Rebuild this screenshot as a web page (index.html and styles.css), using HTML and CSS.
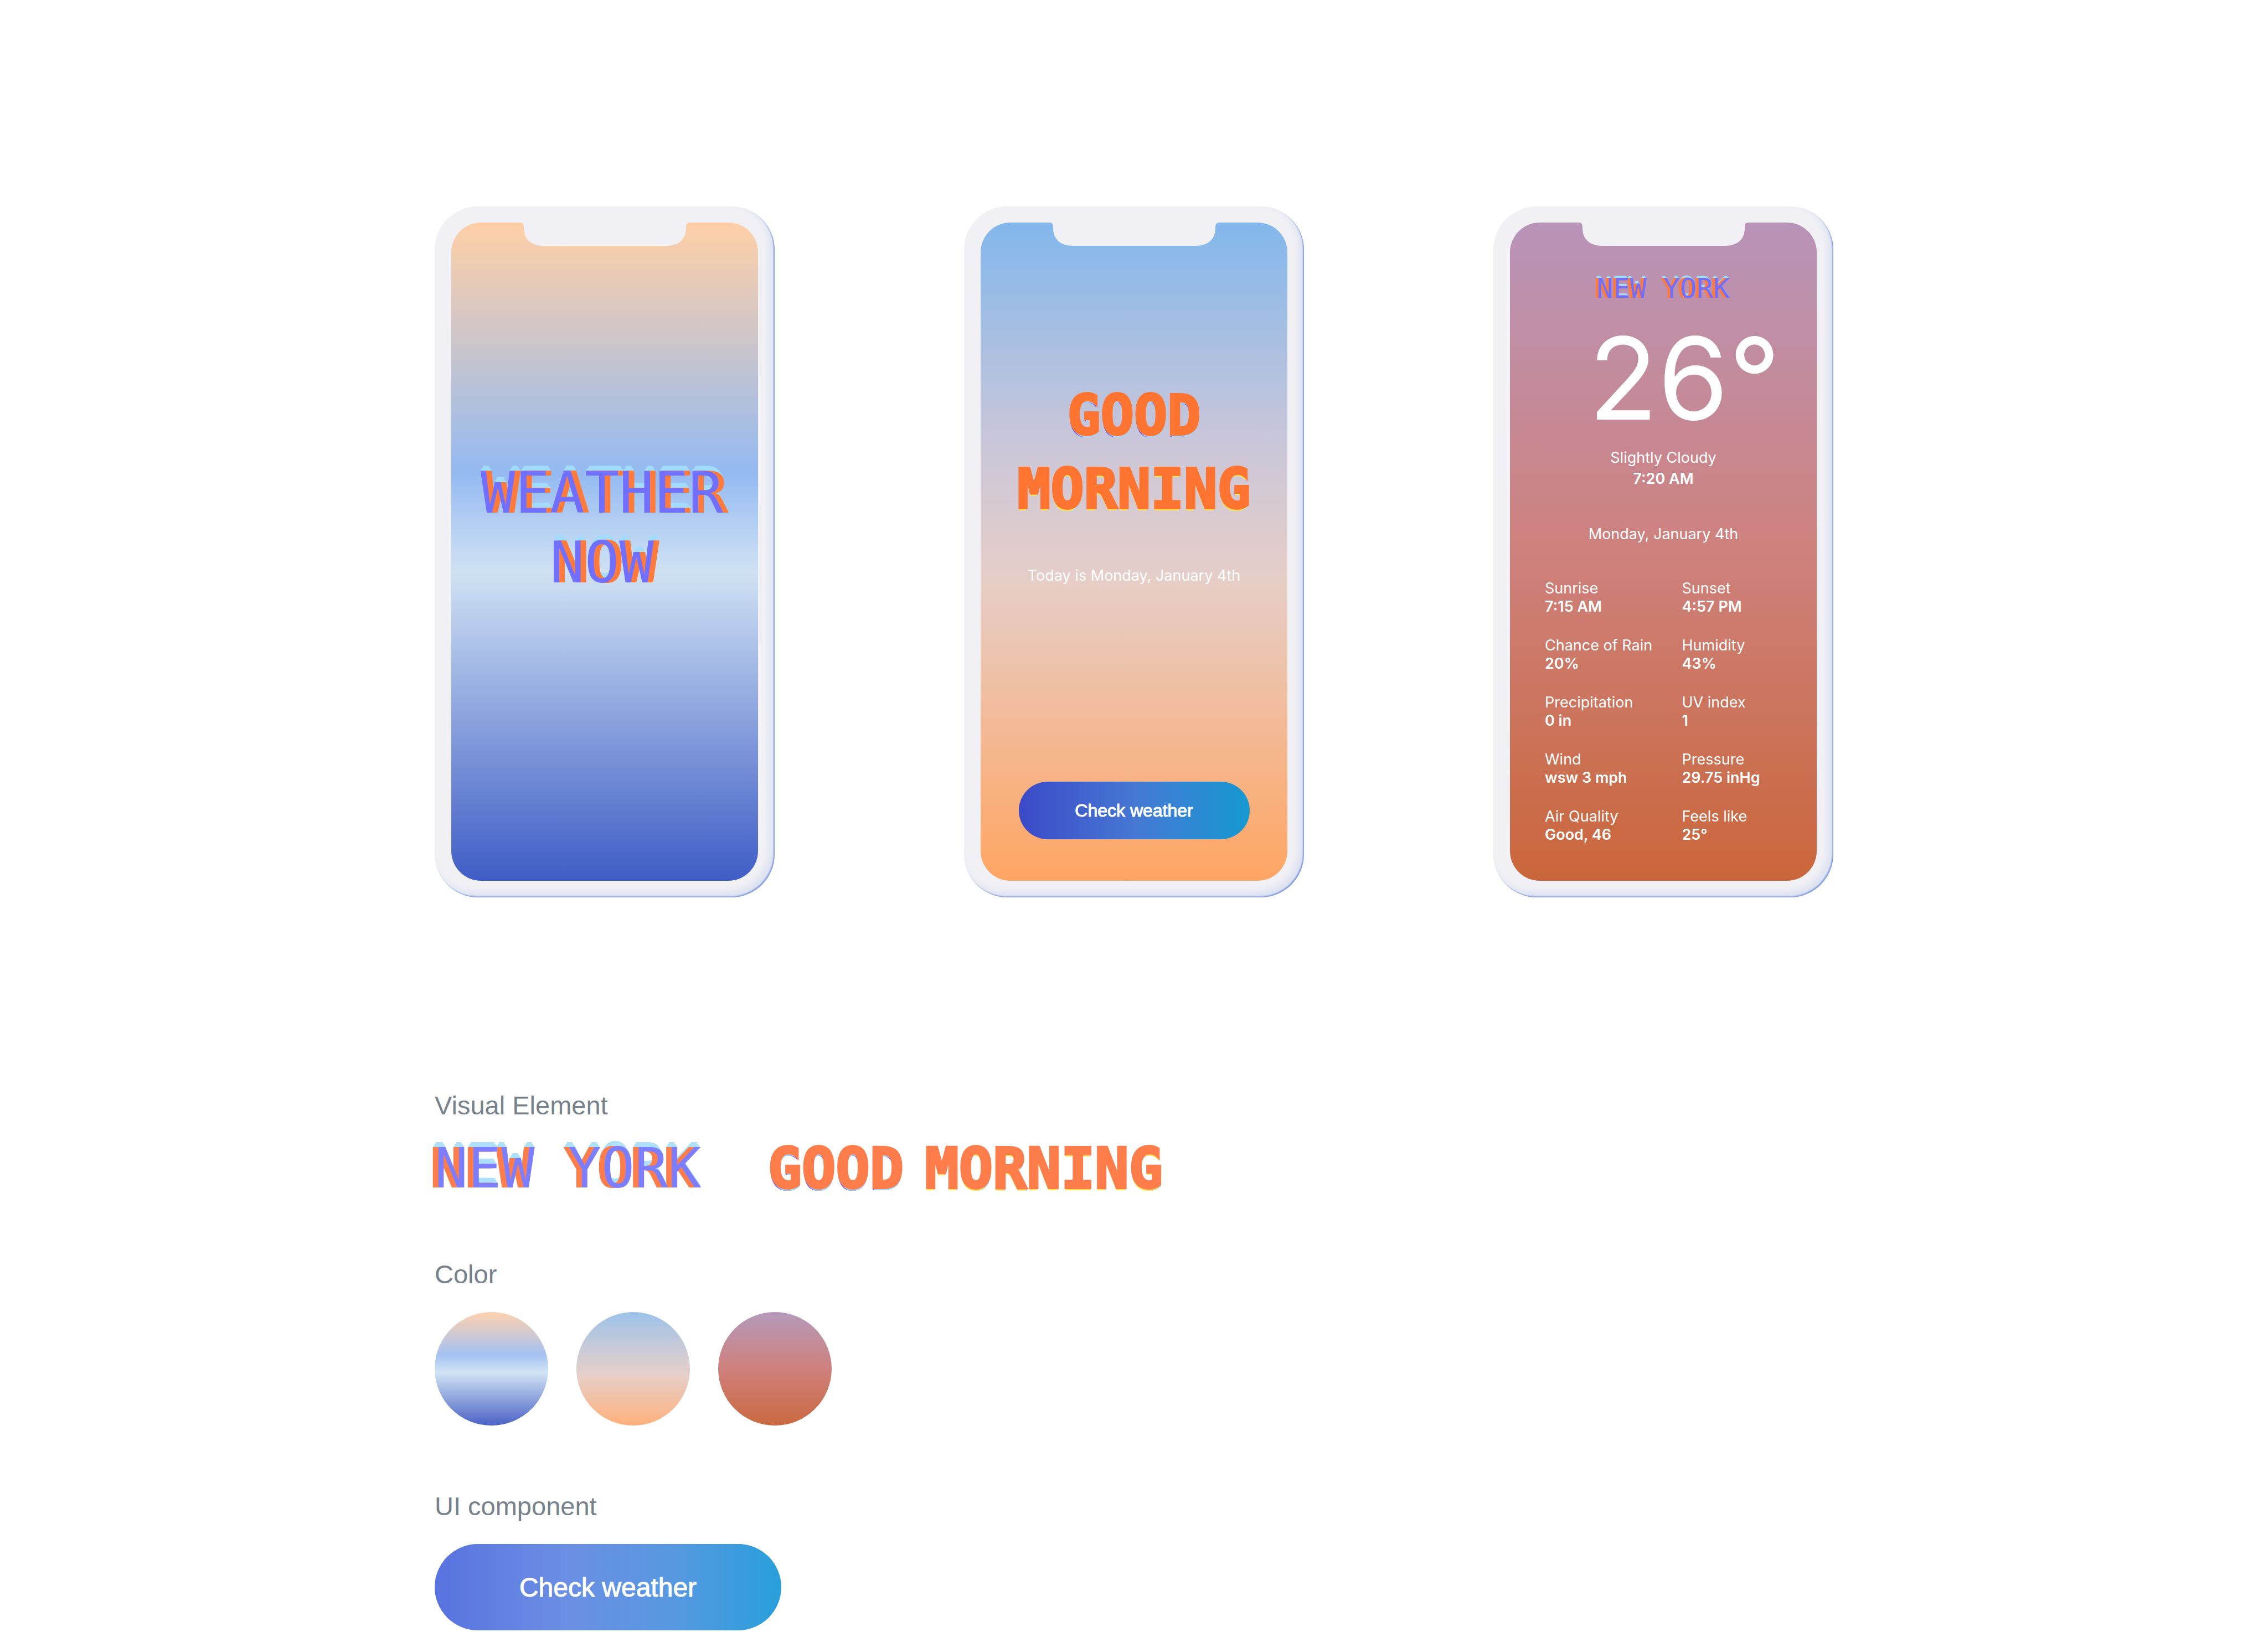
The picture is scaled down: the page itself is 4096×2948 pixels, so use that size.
FILE: index.html
```html
<!DOCTYPE html>
<html lang="en">
<head>
<meta charset="utf-8">
<meta name="viewport" content="width=device-width, initial-scale=1">
<title>Weather Now</title>
<link rel="stylesheet" href="styles.css">
</head>
<body>
<main class="page">
  <section class="phones" aria-label="Screens">
    <article class="phone">
      <div class="screen screen-splash">
        <svg class="notch" viewBox="0 0 307 42" aria-hidden="true"><path d="M0 0H307C301 0 300 4 300 10C300 30 287 42 264 42H43C20 42 7 30 7 10C7 4 6 0 0 0Z"/></svg>
        <h1 class="splash-title iso iso-violet">WEATHER<br>NOW</h1>
      </div>
    </article>

    <article class="phone">
      <div class="screen screen-morning">
        <svg class="notch" viewBox="0 0 307 42" aria-hidden="true"><path d="M0 0H307C301 0 300 4 300 10C300 30 287 42 264 42H43C20 42 7 30 7 10C7 4 6 0 0 0Z"/></svg>
        <h2 class="greeting block"><span class="edge-violet">GOOD</span><br><span class="edge-yellow">MORNING</span></h2>
        <p class="today">Today is Monday, January 4th</p>
        <button class="btn btn-small" type="button">Check weather</button>
      </div>
    </article>

    <article class="phone">
      <div class="screen screen-detail">
        <svg class="notch" viewBox="0 0 307 42" aria-hidden="true"><path d="M0 0H307C301 0 300 4 300 10C300 30 287 42 264 42H43C20 42 7 30 7 10C7 4 6 0 0 0Z"/></svg>
        <h2 class="city iso iso-small">NEW YORK</h2>
        <p class="temp">26°</p>
        <p class="now">Slightly Cloudy<br><strong>7:20 AM</strong></p>
        <p class="date">Monday, January 4th</p>
        <dl class="stats">
          <div><dt>Sunrise</dt><dd>7:15 AM</dd></div>
          <div><dt>Sunset</dt><dd>4:57 PM</dd></div>
          <div><dt>Chance of Rain</dt><dd>20%</dd></div>
          <div><dt>Humidity</dt><dd>43%</dd></div>
          <div><dt>Precipitation</dt><dd>0 in</dd></div>
          <div><dt>UV index</dt><dd>1</dd></div>
          <div><dt>Wind</dt><dd>wsw 3 mph</dd></div>
          <div><dt>Pressure</dt><dd>29.75 inHg</dd></div>
          <div><dt>Air Quality</dt><dd>Good, 46</dd></div>
          <div><dt>Feels like</dt><dd>25°</dd></div>
        </dl>
      </div>
    </article>
  </section>

  <div class="guide">
    <section class="group">
      <h2 class="label">Visual Element</h2>
      <div class="lettering">
        <p class="iso iso-orange">NEW YORK</p>
        <p class="block soft"><span class="edge-violet">GOOD</span> <span class="edge-yellow">MORNING</span></p>
      </div>
    </section>
    <section class="group">
      <h2 class="label">Color</h2>
      <div class="swatches">
        <span class="swatch swatch-splash"></span>
        <span class="swatch swatch-morning"></span>
        <span class="swatch swatch-detail"></span>
      </div>
    </section>
    <section class="group">
      <h2 class="label">UI component</h2>
      <button class="btn btn-large" type="button">Check weather</button>
    </section>
  </div>
</main>
</body>
</html>
```
FILE: styles.css
```css
* {
  box-sizing: border-box;
}

body,
h1,
h2,
p,
dl,
dd {
  margin: 0;
}

body {
  background: #fff;
  color: #fff;
  font-family: Inter, "Liberation Sans", sans-serif;
  font-size: 27px;
  font-weight: 400;
}

.page {
  max-width: 2526px;
  margin: 0 auto;
  padding-top: 373px;
}

/* Phones */
.phones {
  display: flex;
  justify-content: space-between;
}

.phone {
  display: flex;
  width: 614px;
  padding: 29px 30px 30px;
  border-radius: 78px;
  background: #f0f0f5;
  box-shadow: inset -2px -2px 2px #86a0e0, inset -9px -9px 12px rgba(150, 172, 226, 0.22);
}

.screen {
  flex: 1;
  display: flex;
  flex-direction: column;
  align-items: center;
  border-radius: 54px;
  text-align: center;
}

.screen-splash {
  background: linear-gradient(#ffcfa6, #94baf2 38%, #cfe2f3 53%, #3f5dc6);
}

.screen-morning {
  padding-bottom: 75px;
  background: linear-gradient(#82b7ec, #c9c6d9 33%, #e6cec8 54%, #ffa562);
}

.screen-detail {
  padding-bottom: 67px;
  background: linear-gradient(#b894b9, #ce827f 48%, #ca663b);
}

.notch {
  display: block;
  flex: none;
  width: 307px;
  height: 42px;
  fill: #f0f0f5;
}

/* Isometric lettering: left face, right face and lid */
.iso {
  font-family: "DejaVu Sans Mono", monospace;
  font-weight: 400;
  font-size: 100px;
  line-height: 91px;
}

.iso-violet {
  color: #706fff;
  text-shadow: 4px 0 #ff7a3d, 8px 0 #ff7a3d, 10px 0 #ff7a3d, 1px -3px #a2dcfc, 3px -6px #a2dcfc, 5px -9px #a2dcfc, 7px -6px #a2dcfc, 9px -3px #a2dcfc;
}

.iso-orange {
  color: #7d7eff;
  text-shadow: -4px 0 #ff7d4b, -8px 0 #ff7d4b, -10px 0 #ff7d4b, -1px -3px #ade0ff, -3px -6px #ade0ff, -5px -9px #ade0ff, -7px -6px #ade0ff, -9px -3px #ade0ff;
}

.iso-small {
  color: #6f6eff;
  font-size: 50px;
  line-height: 60px;
  text-shadow: -2px 0 #ff7a3d, -4px 0 #ff7a3d, -5px 0 #ff7a3d, -1px -2px #a2dcfc, -3px -4px #a2dcfc, -4px -2px #a2dcfc;
}

/* Solid lettering with a coloured underside */
.block {
  color: #ff7430;
  font-family: "DejaVu Sans Mono", monospace;
  font-weight: 700;
  font-size: 100px;
  line-height: 91px;
  -webkit-text-stroke: 4px #ff7430;
}

.soft {
  display: flex;
  gap: 38px;
  color: #ff7d4b;
  font-size: 102px;
  -webkit-text-stroke-color: #ff7d4b;
}

.edge-violet {
  text-shadow: 1px 4px #a4d6fc, -1px 4px #5f55ff;
}

.edge-yellow {
  text-shadow: -1px 4px #ffe94e, 1px 4px #a4d6fc;
}

.splash-title {
  padding: 383px 10px 0 0;
  font-size: 104px;
  line-height: 126px;
}

.greeting {
  padding-top: 240px;
  line-height: 133px;
}

.today {
  padding-top: 71px;
  line-height: 38px;
}

.city {
  padding-top: 47px;
}

.temp {
  padding: 28px 0 0 76px;
  font-size: 206px;
  line-height: 208px;
}

.now {
  padding-top: 21px;
  line-height: 38px;
}

.now strong {
  font-weight: 600;
}

.date {
  padding-top: 62px;
  line-height: 38px;
}

.stats {
  display: grid;
  grid-template-columns: 1fr 1fr;
  column-gap: 4px;
  row-gap: 37px;
  align-self: stretch;
  padding: 62px 0 0 63px;
  line-height: 33px;
  text-align: left;
}

.stats dd {
  font-weight: 600;
}

/* Buttons */
.btn {
  display: block;
  padding: 0;
  border: 0;
  border-radius: 78px;
  color: #fff;
  font-family: "Liberation Sans", Arial, sans-serif;
  -webkit-text-stroke: 1px #fff;
}

.btn-small {
  width: 417px;
  height: 104px;
  margin-top: auto;
  background: linear-gradient(90deg, #3b4ac7, #4678d4 50%, #1699d1);
  font-size: 32px;
}

.btn-large {
  width: 626px;
  height: 156px;
  background: linear-gradient(90deg, #5872df, #6b8fe4 38%, #5898e1 68%, #289fda);
  font-size: 48px;
}

/* Style guide */
.guide {
  display: flex;
  flex-direction: column;
  gap: 118px;
  padding-top: 348px;
}

.group {
  display: flex;
  flex-direction: column;
  align-items: flex-start;
  gap: 40px;
}

.label {
  color: #76818b;
  font-family: "Liberation Sans", Arial, sans-serif;
  font-weight: 400;
  font-size: 47px;
  line-height: 56px;
}

.lettering {
  display: flex;
  gap: 120px;
}

.swatches {
  display: flex;
  gap: 51px;
}

.swatch {
  width: 205px;
  height: 205px;
  border-radius: 50%;
}

.swatch-splash {
  background: linear-gradient(#ffd1ae, #a3c2f3 38%, #d2e4f4 53%, #4a62c5);
}

.swatch-morning {
  background: linear-gradient(#9dc3ea, #e6cfca 55%, #ffb07b);
}

.swatch-detail {
  background: linear-gradient(#b59abb, #cf7f79 52%, #ca6941);
}
```
